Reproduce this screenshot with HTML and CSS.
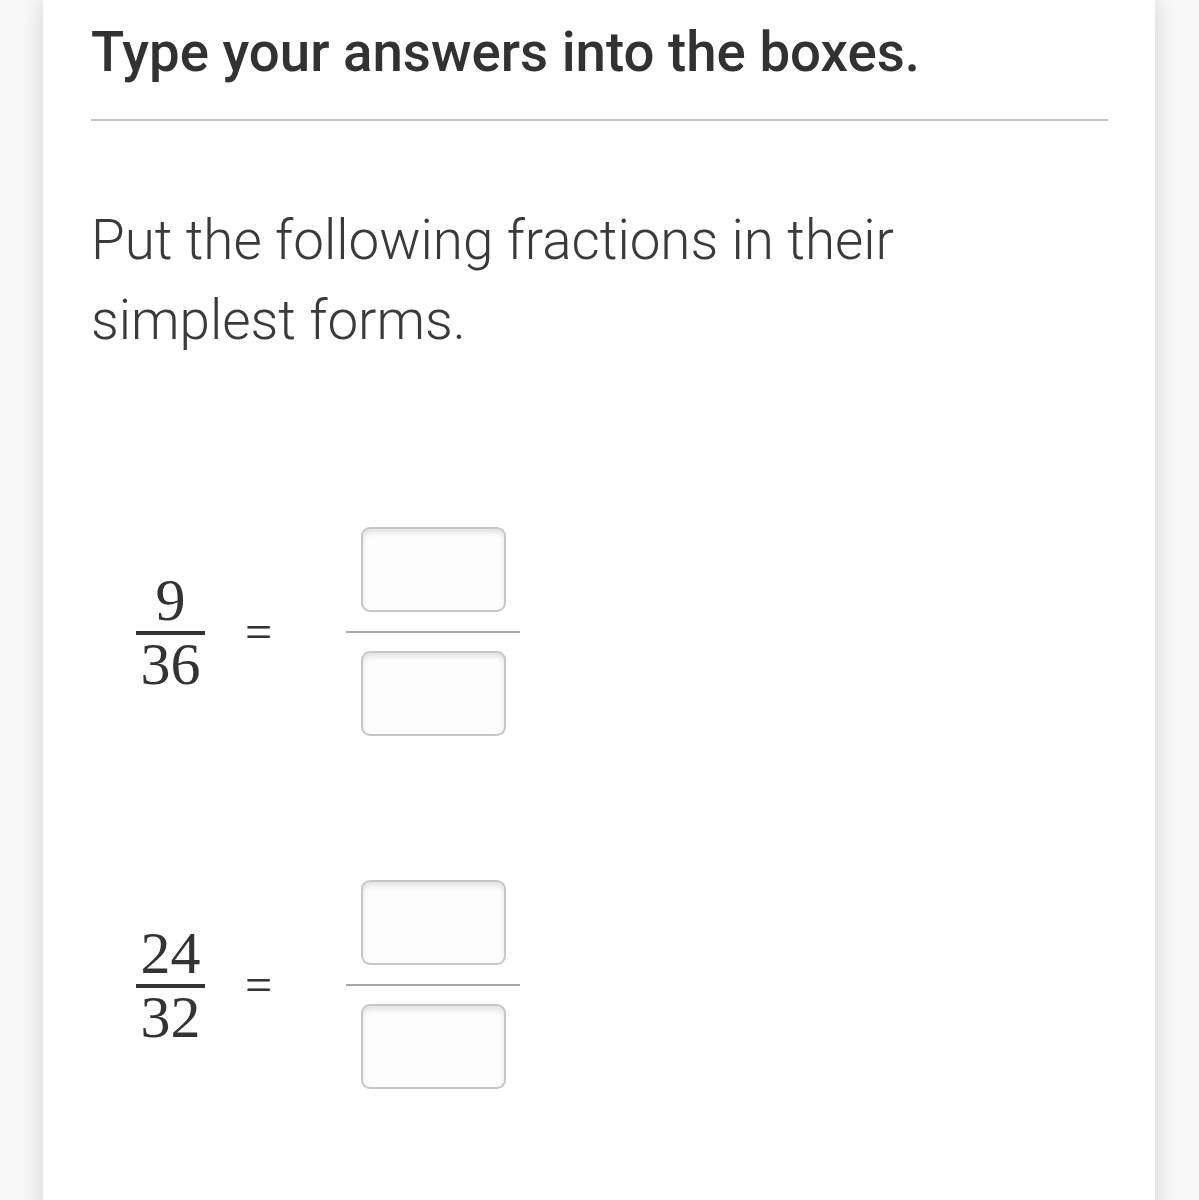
FILE: index.html
```html
<!DOCTYPE html>
<html>
<head>
<meta charset="utf-8">
<link rel="stylesheet" href="styles.css">
</head>
<body>
<div class="card">
  <h1 class="title">Type your answers into the boxes.</h1>
  <div class="rule"></div>
  <p class="prompt">Put the following fractions in their simplest forms.</p>
  <div class="rows">
    <div class="row">
      <div class="frac">
        <div class="num">9</div>
        <div class="bar"></div>
        <div class="den">36</div>
      </div>
      <div class="eq">=</div>
      <div class="answer">
        <input class="box" type="text">
        <div class="aline"></div>
        <input class="box" type="text">
      </div>
    </div>
    <div class="row">
      <div class="frac">
        <div class="num">24</div>
        <div class="bar"></div>
        <div class="den">32</div>
      </div>
      <div class="eq">=</div>
      <div class="answer">
        <input class="box" type="text">
        <div class="aline"></div>
        <input class="box" type="text">
      </div>
    </div>
  </div>
</div>
</body>
</html>
```
FILE: styles.css
```css
html, body {
  margin: 0;
  padding: 0;
}
body {
  background: #f8f8f8;
  font-family: Roboto, "Liberation Sans", sans-serif;
  color: #333333;
}
.card {
  margin: 0 44px 0 43px;
  background: #ffffff;
  box-shadow: 0 0 22px rgba(0, 0, 0, 0.16);
  padding: 20px 47px 120px 48px;
  min-height: 1100px;
}
.title {
  margin: 0;
  font-size: 54.6px;
  font-weight: 500;
  line-height: 64px;
  color: #323232;
}
.rule {
  height: 2px;
  background: #c4c4c4;
  margin-top: 35px;
}
.prompt {
  margin: 79px 0 0 0;
  font-size: 54.75px;
  font-weight: 300;
  line-height: 80px;
  color: #3a3a3a;
  max-width: 880px;
}
.rows {
  display: flex;
  flex-direction: column;
  gap: 144px;
  margin-top: 167px;
}
.row {
  display: flex;
  align-items: center;
}
.frac {
  display: flex;
  flex-direction: column;
  align-items: center;
  margin-left: 45px;
  width: 69px;
  font-family: "Liberation Serif", serif;
  font-size: 60px;
  line-height: 50px;
  color: #333333;
}
.num {
  padding-bottom: 6px;
}
.den {
  padding-top: 4px;
}
.bar {
  width: 69px;
  height: 4px;
  background: #333333;
}
.eq {
  margin-left: 40px;
  font-family: "Liberation Serif", serif;
  font-size: 48px;
  line-height: 48px;
  color: #333333;
}
.answer {
  margin-left: 74px;
  width: 174px;
  display: flex;
  flex-direction: column;
  align-items: center;
}
.box {
  display: block;
  width: 145px;
  height: 85px;
  box-sizing: border-box;
  border: 2px solid #c6c6c6;
  border-radius: 9px;
  background: #fdfdfd;
  box-shadow: inset 0 4px 5px rgba(0, 0, 0, 0.10);
  padding: 0;
  margin: 0;
  outline: none;
}
.aline {
  width: 174px;
  height: 2px;
  background: #a8a8a8;
  margin: 19px 0 18px 0;
}
```
